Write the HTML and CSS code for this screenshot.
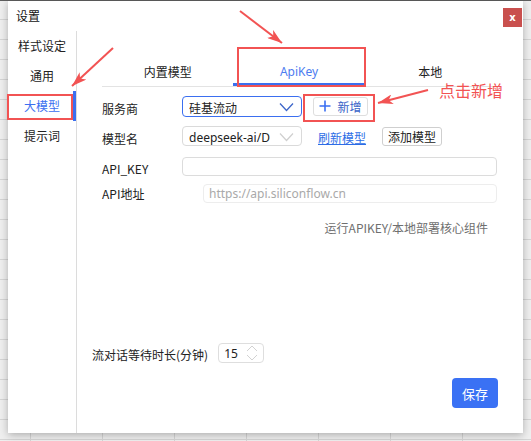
FILE: index.html
```html
<!DOCTYPE html>
<html lang="zh-CN">
<head>
<meta charset="utf-8">
<title>设置</title>
<link rel="stylesheet" href="styles.css">
</head>
<body>
<div class="topline"></div>
<div class="dialog">
  <header class="titlebar">
    <span class="title">设置</span>
    <button class="close">x</button>
  </header>
  <div class="main">
    <nav class="side">
      <div class="side-item">样式设定</div>
      <div class="side-item">通用</div>
      <div class="side-item active">大模型</div>
      <div class="side-item">提示词</div>
    </nav>
    <section class="content">
      <div class="tabs">
        <div class="tab">内置模型</div>
        <div class="tab active">ApiKey</div>
        <div class="tab">本地</div>
      </div>
      <div class="form">
        <div class="row r1">
          <label class="lbl">服务商</label>
          <div class="select focus">
            <span class="val">硅基流动</span>
            <svg class="chev" width="15" height="10" viewBox="0 0 15 10"><path d="M1 1.5 L7.5 8.5 L14 1.5" fill="none" stroke="#3d66c9" stroke-width="1.3"/></svg>
          </div>
          <button class="btn btn-add">
            <svg width="12" height="12" viewBox="0 0 12 12"><path d="M6 0.5 V11.5 M0.5 6 H11.5" stroke="#3a6ff2" stroke-width="1.6"/></svg>
            <span>新增</span>
          </button>
        </div>
        <div class="row r2">
          <label class="lbl">模型名</label>
          <div class="select">
            <span class="val">deepseek-ai/D</span>
            <svg class="chev" width="15" height="10" viewBox="0 0 15 10"><path d="M1 1.5 L7.5 8.5 L14 1.5" fill="none" stroke="#cfcfcf" stroke-width="1.2"/></svg>
          </div>
          <a class="link">刷新模型</a>
          <button class="btn btn-plain">添加模型</button>
        </div>
        <div class="row r3">
          <label class="lbl">API_KEY</label>
          <div class="input"></div>
        </div>
        <div class="row r4">
          <label class="lbl wide">API地址</label>
          <div class="input light"><span class="ph">https://api.siliconflow.cn</span></div>
        </div>
      </div>
      <div class="note">运行APIKEY/本地部署核心组件</div>
      <div class="spacer"></div>
      <div class="wait-row">
        <span class="wait-lbl">流对话等待时长(分钟)</span>
        <div class="num">
          <span class="num-val">15</span>
          <span class="spin">
            <svg width="12" height="7" viewBox="0 0 12 7"><path d="M1 6 L6 1 L11 6" fill="none" stroke="#d2d2d2" stroke-width="1"/></svg>
            <svg width="12" height="7" viewBox="0 0 12 7"><path d="M1 1 L6 6 L11 1" fill="none" stroke="#d2d2d2" stroke-width="1"/></svg>
          </span>
        </div>
      </div>
      <div class="actions"><button class="save">保存</button></div>
    </section>
  </div>
</div>

<div class="mark mark-tab"></div>
<div class="mark mark-add"></div>
<div class="mark mark-side"></div>
<div class="hint">点击新增</div>
<svg class="arrows" width="531" height="441" viewBox="0 0 531 441">
  <defs>
    <marker id="ah" markerUnits="userSpaceOnUse" markerWidth="16" markerHeight="10" refX="15" refY="5" orient="auto">
      <path d="M0 0 L15 5 L0 10 L4 5 Z" fill="#f25353"/>
    </marker>
  </defs>
  <line x1="240" y1="11" x2="282" y2="43" stroke="#f25353" stroke-width="2" marker-end="url(#ah)"/>
  <line x1="113" y1="48" x2="72" y2="86" stroke="#f25353" stroke-width="2" marker-end="url(#ah)"/>
  <line x1="428" y1="90" x2="378" y2="103" stroke="#f25353" stroke-width="2" marker-end="url(#ah)"/>
</svg>
</body>
</html>
```

FILE: styles.css
```css
* { box-sizing: border-box; }

html, body {
  margin: 0;
  padding: 0;
}

body {
  width: 531px;
  height: 441px;
  overflow: hidden;
  position: relative;
  font-family: "Noto Sans CJK SC", "Noto Sans", sans-serif;
  font-size: 12px;
  color: #333;
  background-color: #efefef;
  background-image:
    linear-gradient(#d5d5d5 1px, transparent 1px),
    linear-gradient(90deg, #d5d5d5 1px, transparent 1px);
  background-size: 72px 20px;
  background-position: 30px 19px;
}

.topline {
  height: 1px;
  background: #5f5f5f;
}

.dialog {
  margin-left: 8px;
  width: 515px;
  height: 432px;
  background: #fff;
  box-shadow: 0 2px 8px rgba(0, 0, 0, 0.28);
  display: flex;
  flex-direction: column;
}

.titlebar {
  height: 30px;
  display: flex;
  align-items: flex-start;
  justify-content: space-between;
  padding-left: 8px;
  padding-right: 1px;
}

.title {
  font-size: 12px;
  line-height: 30px;
  color: #111;
}

.close {
  margin-top: 7px;
  width: 19px;
  height: 19px;
  border: none;
  padding: 0;
  background: #c9504e;
  color: #fff;
  font-family: "DejaVu Sans", sans-serif;
  font-weight: bold;
  font-size: 10px;
  line-height: 17px;
}

.main {
  flex: 1;
  display: flex;
  min-height: 0;
}

.side {
  width: 69px;
  border-right: 1px solid #dcdcdc;
  display: flex;
  flex-direction: column;
}

.side-item {
  height: 30px;
  line-height: 30px;
  text-align: center;
  color: #222;
}

.side-item.active {
  color: #3b6ff0;
  box-shadow: inset -3px 0 0 #3b6ff0;
}

.content {
  flex: 1;
  display: flex;
  flex-direction: column;
  padding: 0 26px 25px 25px;
}

.tabs {
  margin-top: 26px;
  display: flex;
  border-bottom: 1px solid #e3e3e3;
  margin-right: 1px;
}

.tab {
  flex: 1;
  height: 29px;
  line-height: 29px;
  text-align: center;
  color: #222;
}

.tab.active {
  color: #4d7cf0;
  box-shadow: inset 0 -3px 0 #3b6ff0;
  font-family: "Noto Sans", "Noto Sans CJK SC", sans-serif;
}

.form {
  margin-top: 4px;
  display: flex;
  flex-direction: column;
}

.row {
  display: flex;
  align-items: center;
  height: 30px;
}

.row.r4 {
  height: 24px;
}

.lbl {
  width: 80px;
  flex: none;
  padding-top: 4px;
  color: #222;
}

.lbl.wide {
  width: 101px;
  padding-top: 1px;
}

.select {
  width: 120px;
  height: 21px;
  border: 1px solid #dadada;
  border-radius: 4px;
  display: flex;
  align-items: center;
  justify-content: space-between;
  padding: 2px 7px 0 6px;
}

.select.focus {
  border-color: #3b6ff0;
}

.r2 .select {
  height: 20px;
}

.val {
  color: #222;
  white-space: nowrap;
  overflow: hidden;
}

.r2 .val {
  font-family: "Noto Sans", "Noto Sans CJK SC", sans-serif;
}

.chev {
  flex: none;
  display: block;
}

.btn {
  height: 19px;
  border: 1px solid #d4d4d4;
  border-radius: 3px;
  background: #fff;
  font-family: inherit;
  font-size: 12px;
  padding: 0;
  display: flex;
  align-items: center;
  justify-content: center;
}

.btn-add {
  margin-left: 11px;
  width: 55px;
  gap: 6px;
  color: #3a64c8;
  border-color: #dedede;
}

.btn-add svg {
  display: block;
}

.link {
  margin-left: 16px;
  color: #2d6de6;
  text-decoration: underline;
  padding-top: 2px;
}

.btn-plain {
  margin-left: 16px;
  width: 60px;
  color: #222;
  border-color: #cfcfcf;
}

.input {
  flex: 1;
  height: 19px;
  border: 1px solid #dcdcdc;
  border-radius: 4px;
}

.input.light {
  border-color: #ededed;
  display: flex;
  align-items: center;
  padding-left: 5px;
}

.ph {
  color: #a9a9a9;
  font-family: "Noto Sans", sans-serif;
  font-size: 12px;
  padding-top: 1px;
}

.note {
  margin-top: 14px;
  margin-right: 9px;
  height: 18px;
  line-height: 18px;
  text-align: right;
  color: #6f6f6f;
}

.spacer {
  flex: 1;
}

.wait-row {
  margin-left: -10px;
  display: flex;
  align-items: center;
  height: 20px;
}

.wait-lbl {
  color: #222;
  padding-top: 2px;
}

.num {
  margin-left: 10px;
  width: 46px;
  height: 20px;
  border: 1px solid #dedede;
  border-radius: 4px;
  display: flex;
  align-items: center;
  justify-content: space-between;
  padding: 0 5px 0 5px;
}

.num-val {
  font-family: "Noto Sans", sans-serif;
  color: #222;
  padding-top: 1px;
}

.spin {
  display: flex;
  flex-direction: column;
  gap: 2px;
}

.spin svg {
  display: block;
}

.actions {
  margin-top: 15px;
  display: flex;
  justify-content: flex-end;
  margin-right: -1px;
}

.save {
  width: 46px;
  height: 30px;
  border: none;
  border-radius: 4px;
  background: #3a71f4;
  color: #fff;
  font-family: inherit;
  font-size: 13px;
  padding: 0;
}

/* annotations overlay */
.mark {
  position: absolute;
  border: 2px solid #f25353;
}

.mark-tab {
  left: 237px;
  top: 47px;
  width: 129px;
  height: 40px;
}

.mark-add {
  left: 303px;
  top: 94px;
  width: 72px;
  height: 28px;
}

.mark-side {
  left: 7px;
  top: 94px;
  width: 66px;
  height: 26px;
}

.hint {
  position: absolute;
  left: 439px;
  top: 79px;
  font-size: 16px;
  line-height: 22px;
  color: #f25353;
}

.arrows {
  position: absolute;
  left: 0;
  top: 0;
  pointer-events: none;
}
```
